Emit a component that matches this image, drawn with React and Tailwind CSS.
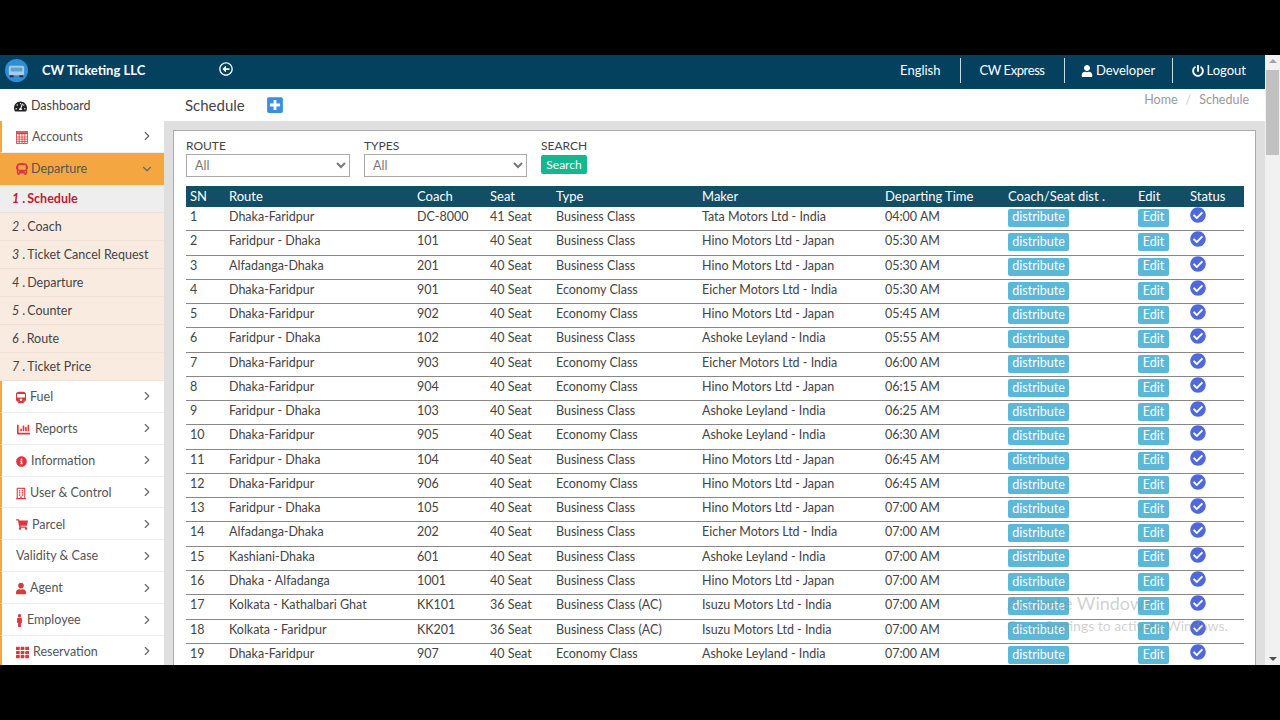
import React from "react";
import {
  FaTachometerAlt,
  FaBus,
  FaTrain,
  FaChartBar,
  FaInfoCircle,
  FaRegBuilding,
  FaShoppingCart,
  FaUser,
  FaMale,
  FaTh,
  FaPowerOff,
  FaCheckCircle,
  FaPlusSquare,
  FaRegArrowAltCircleLeft,
} from "react-icons/fa";
import { LuChevronRight, LuChevronDown } from "react-icons/lu";

const GridIcon = ({ className }) => (
  <svg className={className} viewBox="0 0 12 13" fill="none" stroke="currentColor" strokeWidth="0.8">
    <rect x="0.5" y="0.5" width="11" height="12" />
    <path d="M0.5 2.2h11" strokeWidth="2" />
    <path d="M0.5 6h11M0.5 8.2h11M0.5 10.4h11M3.2 3v9.5M6 3v9.5M8.8 3v9.5" />
  </svg>
);

const subItems = ["Schedule", "Coach", "Ticket Cancel Request", "Departure", "Counter", "Route", "Ticket Price"];

const lowerItems = [
  { label: "Fuel", icon: FaTrain, size: "w-[10px]" },
  { label: "Reports", icon: FaChartBar, size: "w-[15px]" },
  { label: "Information", icon: FaInfoCircle, size: "w-[11px]" },
  { label: "User & Control", icon: FaRegBuilding, size: "w-[10px]" },
  { label: "Parcel", icon: FaShoppingCart, size: "w-[12px]" },
  { label: "Validity & Case" },
  { label: "Agent", icon: FaUser, size: "w-[10px]" },
  { label: "Employee", icon: FaMale, size: "w-[7px]" },
  { label: "Reservation", icon: FaTh, size: "w-[13px]" },
];

const rows = [
  ["Dhaka-Faridpur", "DC-8000", "41 Seat", "Business Class", "Tata Motors Ltd - India", "04:00 AM"],
  ["Faridpur - Dhaka", "101", "40 Seat", "Business Class", "Hino Motors Ltd - Japan", "05:30 AM"],
  ["Alfadanga-Dhaka", "201", "40 Seat", "Business Class", "Hino Motors Ltd - Japan", "05:30 AM"],
  ["Dhaka-Faridpur", "901", "40 Seat", "Economy Class", "Eicher Motors Ltd - India", "05:30 AM"],
  ["Dhaka-Faridpur", "902", "40 Seat", "Economy Class", "Hino Motors Ltd - Japan", "05:45 AM"],
  ["Faridpur - Dhaka", "102", "40 Seat", "Business Class", "Ashoke Leyland - India", "05:55 AM"],
  ["Dhaka-Faridpur", "903", "40 Seat", "Economy Class", "Eicher Motors Ltd - India", "06:00 AM"],
  ["Dhaka-Faridpur", "904", "40 Seat", "Economy Class", "Hino Motors Ltd - Japan", "06:15 AM"],
  ["Faridpur - Dhaka", "103", "40 Seat", "Business Class", "Ashoke Leyland - India", "06:25 AM"],
  ["Dhaka-Faridpur", "905", "40 Seat", "Economy Class", "Ashoke Leyland - India", "06:30 AM"],
  ["Faridpur - Dhaka", "104", "40 Seat", "Business Class", "Hino Motors Ltd - Japan", "06:45 AM"],
  ["Dhaka-Faridpur", "906", "40 Seat", "Economy Class", "Hino Motors Ltd - Japan", "06:45 AM"],
  ["Faridpur - Dhaka", "105", "40 Seat", "Business Class", "Hino Motors Ltd - Japan", "07:00 AM"],
  ["Alfadanga-Dhaka", "202", "40 Seat", "Business Class", "Eicher Motors Ltd - India", "07:00 AM"],
  ["Kashiani-Dhaka", "601", "40 Seat", "Business Class", "Ashoke Leyland - India", "07:00 AM"],
  ["Dhaka - Alfadanga", "1001", "40 Seat", "Business Class", "Hino Motors Ltd - Japan", "07:00 AM"],
  ["Kolkata - Kathalbari Ghat", "KK101", "36 Seat", "Business Class (AC)", "Isuzu Motors Ltd - India", "07:00 AM"],
  ["Kolkata - Faridpur", "KK201", "36 Seat", "Business Class (AC)", "Isuzu Motors Ltd - India", "07:00 AM"],
  ["Dhaka-Faridpur", "907", "40 Seat", "Economy Class", "Ashoke Leyland - India", "07:00 AM"],
];

const SideRow = ({ icon: Icon, label, size }) => (
  <div className="h-[31.9px] flex items-center justify-between pl-[14px] pr-[10px] border-l-2 border-l-[#f4a640] border-b border-b-[#eeeeee] text-[#555]">
    <span className="flex items-center gap-[4px] pt-[2px]">
      {Icon && <Icon className={`${size} h-[13px] text-[#d9383f]`} />}
      {label}
    </span>
    <LuChevronRight className="text-[#666] text-[14px]" />
  </div>
);

const App = () => {
  return (
    <div className="h-screen bg-black flex flex-col font-['Lato','Noto_Sans',sans-serif] text-[12.5px] text-[#444] overflow-hidden">
      <div className="h-[55px] shrink-0" />
      <div className="h-[610px] flex">
        <div className="flex-1 min-w-0 flex flex-col bg-[#dfdfdf]">
          {/* Top bar */}
          <header className="h-[34px] shrink-0 bg-[#03415f] text-white flex items-center justify-between text-[13px] pb-[3px]">
            <div className="flex items-center">
              <svg className="ml-[5px] w-[23px] h-[23px]" viewBox="0 0 24 24">
                <circle cx="12" cy="12" r="12" fill="#2f8fd6" />
                <rect x="4" y="7" width="16" height="10" rx="2" fill="#a9cbe6" />
                <rect x="6" y="9" width="12" height="4" fill="#5f9fcf" />
                <rect x="5" y="17" width="4" height="2" fill="#12344d" />
                <rect x="15" y="17" width="4" height="2" fill="#12344d" />
              </svg>
              <span className="ml-[14px] font-bold">CW Ticketing LLC</span>
              <FaRegArrowAltCircleLeft className="ml-[74px] -mt-[4px] text-[14px]" />
            </div>
            <nav className="flex items-center pr-[19px]">
              <span className="pr-[19px]">English</span>
              <span className="w-[104px] border-l border-white/80 h-[25px] flex items-center justify-center tracking-[-0.4px]">
                CW Express
              </span>
              <span className="w-[108px] border-l border-white/80 h-[25px] flex items-center justify-center gap-[3px]">
                <FaUser className="text-[12px]" />
                Developer
              </span>
              <span className="pl-[19px] border-l border-white/80 h-[25px] flex items-center gap-[3px]">
                <FaPowerOff className="text-[12px]" />
                Logout
              </span>
            </nav>
          </header>

          <div className="flex-1 min-h-0 flex">
            {/* Sidebar */}
            <aside className="w-[164px] shrink-0 bg-white overflow-hidden">
              <div className="h-[32px] flex items-center gap-[4px] pl-[14px] pt-[2px] text-[#444]">
                <FaTachometerAlt className="text-[#222] text-[13px]" />
                Dashboard
              </div>
              <SideRow icon={GridIcon} size="w-[12px]" label="Accounts" />
              <div className="h-[32px] bg-[#f4a640] flex items-center justify-between pl-[16px] pr-[10px] text-[#555]">
                <span className="flex items-center gap-[3px]">
                  <FaBus className="text-[#d9383f] text-[12px]" />
                  Departure
                </span>
                <LuChevronDown className="text-[#666] text-[14px]" />
              </div>
              {subItems.map((item, i) => (
                <div
                  key={item}
                  className={
                    i === 0
                      ? "h-[28px] flex items-center pl-[12px] pt-[2px] bg-[#eeeeee] text-[#b81f32] font-bold border-b border-b-[#f3e2d4]"
                      : "h-[28px] flex items-center pl-[12px] pt-[2px] bg-[#faebe0] text-[#444] border-b border-b-[#f3e2d4]"
                  }
                >
                  <i className="mr-[3px]">{i + 1}</i>
                  <span className="mr-[2px]">.</span>
                  {item}
                </div>
              ))}
              {lowerItems.map((item) => (
                <SideRow key={item.label} icon={item.icon} size={item.size} label={item.label} />
              ))}
            </aside>

            {/* Main */}
            <main className="flex-1 min-w-0 flex flex-col">
              <div className="h-[32px] shrink-0 bg-white flex items-center justify-between pl-[21px] pr-[16px]">
                <div className="flex items-center gap-[21px]">
                  <span className="text-[15px] text-[#444]">Schedule</span>
                  <FaPlusSquare className="text-[#3b8fe0] text-[18px]" />
                </div>
                <div className="text-[#999] -mt-[10px]">
                  Home<span className="mx-[8px] text-[#ccc]">/</span>Schedule
                </div>
              </div>

              <div className="flex-1 min-h-0 pt-[9px] pl-[9px] pr-[9px]">
                <div className="h-full bg-white border border-[#aaaaaa] border-b-0 pt-[6px] pl-[12px] pr-[11px] overflow-hidden relative">
                  <div className="flex gap-[14px] h-[49px] text-[12px]">
                    <label className="w-[164px] block">
                      <span className="block leading-[17px]">ROUTE</span>
                      <select className="w-full h-[23px] border border-[#aaaaaa] bg-white pl-[4px] text-[#777] text-[12.5px]">
                        <option>All</option>
                      </select>
                    </label>
                    <label className="w-[163px] block">
                      <span className="block leading-[17px]">TYPES</span>
                      <select className="w-full h-[23px] border border-[#aaaaaa] bg-white pl-[4px] text-[#777] text-[12.5px]">
                        <option>All</option>
                      </select>
                    </label>
                    <div>
                      <span className="block leading-[17px]">SEARCH</span>
                      <button className="block mt-[1px] w-[46px] h-[19px] rounded-[2px] bg-[#13b88e] text-white text-[12px] leading-none">
                        Search
                      </button>
                    </div>
                  </div>

                  <table className="w-[1058px] table-fixed border-collapse">
                    <colgroup>
                      <col className="w-[43px]" />
                      <col className="w-[188px]" />
                      <col className="w-[73px]" />
                      <col className="w-[66px]" />
                      <col className="w-[146px]" />
                      <col className="w-[183px]" />
                      <col className="w-[123px]" />
                      <col className="w-[130px]" />
                      <col className="w-[52px]" />
                      <col className="w-[54px]" />
                    </colgroup>
                    <thead>
                      <tr className="h-[20px] bg-[#124e66] text-white text-left text-[13px]">
                        <th className="font-normal pl-[4px] pt-[1px]">SN</th>
                        <th className="font-normal pt-[1px]">Route</th>
                        <th className="font-normal pt-[1px]">Coach</th>
                        <th className="font-normal pt-[1px]">Seat</th>
                        <th className="font-normal pt-[1px]">Type</th>
                        <th className="font-normal pt-[1px]">Maker</th>
                        <th className="font-normal pt-[1px]">Departing Time</th>
                        <th className="font-normal pt-[1px]">Coach/Seat dist .</th>
                        <th className="font-normal pt-[1px]">Edit</th>
                        <th className="font-normal pt-[1px]">Status</th>
                      </tr>
                    </thead>
                    <tbody>
                      {rows.map((row, i) => (
                        <tr key={i} className="h-[24.27px] border-b border-b-[#888888]">
                          <td className="pl-[4px] pt-[1px] align-top leading-[18px]">{i + 1}</td>
                          {row.map((cell, j) => (
                            <td key={j} className="pt-[1px] align-top leading-[18px] whitespace-nowrap">
                              {cell}
                            </td>
                          ))}
                          <td className="pt-[2px] align-top">
                            <button className="block w-[61px] h-[18px] rounded-[2px] bg-[#5bb8d8] text-white text-[12.5px] leading-none">
                              distribute
                            </button>
                          </td>
                          <td className="pt-[2px] align-top">
                            <button className="block w-[31px] h-[18px] rounded-[2px] bg-[#5bb8d8] text-white text-[12.5px] leading-none">
                              Edit
                            </button>
                          </td>
                          <td className="align-top">
                            <FaCheckCircle className="text-[#4f69dc] text-[16px]" />
                          </td>
                        </tr>
                      ))}
                    </tbody>
                  </table>

                  {/* Windows watermark */}
                  <div className="absolute left-[833px] top-[461px] text-[#888]/40 pointer-events-none">
                    <div className="text-[18px] leading-[23px]">Activate Windows</div>
                    <div className="text-[14px]">Go to Settings to activate Windows.</div>
                  </div>
                </div>
              </div>
            </main>
          </div>
        </div>

        {/* Page scrollbar */}
        <div className="w-[15px] shrink-0 bg-[#f1f1f1] flex flex-col items-center justify-between relative">
          <span className="mt-[4px] w-0 h-0 border-x-[4px] border-x-transparent border-b-[4px] border-b-[#a3a3a3]" />
          <span className="absolute top-[15px] left-[1px] w-[13px] h-[85px] bg-[#c1c1c1]" />
          <span className="mb-[4px] w-0 h-0 border-x-[4px] border-x-transparent border-t-[4px] border-t-[#505050]" />
        </div>
      </div>
      <div className="flex-1" />
    </div>
  );
};

export default App;
